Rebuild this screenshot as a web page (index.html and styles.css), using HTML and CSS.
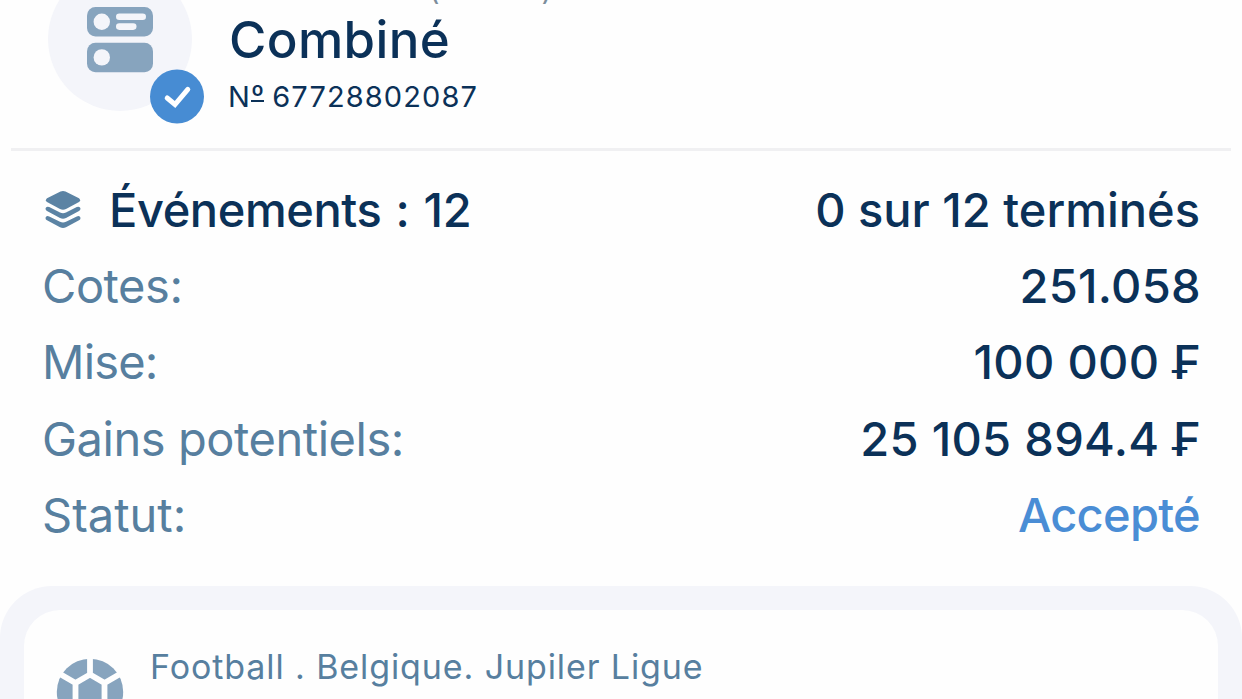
FILE: index.html
```
<!DOCTYPE html>
<html lang="fr">
<head>
<meta charset="utf-8">
<title>Combiné</title>
<link rel="stylesheet" href="styles.css">
</head>
<body>
<main class="page">
  <header class="coupon">
    <div class="coupon-icon">
      <svg class="slip" width="66" height="66" viewBox="0 0 66 66" fill="#87a4be">
        <rect width="66" height="29.5" rx="8.5"/>
        <rect y="35.7" width="66" height="29.5" rx="8.5"/>
        <g fill="#f4f5fa">
          <circle cx="14.8" cy="14.7" r="8.2"/>
          <circle cx="14.8" cy="50.4" r="8.2"/>
          <rect x="29" y="6.5" width="30" height="6.6" rx="3.3"/>
          <rect x="29" y="16.3" width="20.5" height="6.6" rx="3.3"/>
        </g>
      </svg>
      <svg class="badge" width="54" height="55" viewBox="0 0 54 55">
        <circle cx="27" cy="27.5" r="27" fill="#478cd3"/>
        <path d="M17.2 29L25 35.500L37.800 20.300" fill="none" stroke="#fff" stroke-width="5" stroke-linecap="round" stroke-linejoin="miter"/>
      </svg>
    </div>
    <div class="coupon-text">
      <div class="date"><span>(</span><span>)</span></div>
      <h1 class="title">Combiné</h1>
      <div class="number">N<span class="ordinal">º</span> 67728802087</div>
    </div>
  </header>
  <section class="details">
    <div class="row">
      <div class="events">
        <svg class="layers" width="36" height="40" viewBox="0 0 36 40" fill="#5b83a4">
          <path d="M15.5 1.500Q18 .3 20.500 1.500L34 8.300Q36.200 10.200 34 12.100L21 19Q18 20.500 15 19L2 12.100Q-.2 10.200 2 8.300Z"/>
          <path d="M1 17.400Q2.200 16.100 4.200 17.100L15 22.500Q18 24 21 22.500L31.800 17.100Q33.800 16.100 35 17.400Q36.300 19.500 34 21L21 28Q18 29.500 15 28L2 21Q-.3 19.500 1 17.400Z"/>
          <path d="M1 26.700Q2.200 25.400 4.200 26.400L15 31.800Q18 33.300 21 31.800L31.800 26.400Q33.800 25.400 35 26.700Q36.300 28.800 34 30.300L21 37.300Q18 38.800 15 37.300L2 30.300Q-.3 28.800 1 26.700Z"/>
        </svg>
        <span class="value events-count">Événements : 12</span>
      </div>
      <span class="value finished">0 sur 12 terminés</span>
    </div>
    <div class="row"><span class="label">Cotes:</span><span class="value amount">251.058</span></div>
    <div class="row"><span class="label stake">Mise:</span><span class="value amount">100 000 ₣</span></div>
    <div class="row"><span class="label">Gains potentiels:</span><span class="value amount">25 105 894.4 ₣</span></div>
    <div class="row"><span class="label state">Statut:</span><span class="value status">Accepté</span></div>
  </section>
  <section class="events-panel">
    <article class="event">
      <svg class="ball" width="68" height="68" viewBox="0 0 68 68">
        <circle cx="34" cy="34" r="33.200" fill="#87a4be"/>
        <g fill="none" stroke="#fefefe" stroke-width="5.800">
          <path d="M34 -1V16.500M34 16.500L48.500 25V43L34 51L19.500 43V25ZM48.500 25L64 16M19.500 25L4 16M48.500 43L64 52M19.500 43L4 52M34 51V69"/>
        </g>
      </svg>
      <span class="league">Football . Belgique. Jupiler Ligue</span>
    </article>
  </section>
</main>
</body>
</html>
```
FILE: styles.css
```
* { box-sizing: border-box; }
body {
  margin: 0;
  overflow: hidden;
  background: #fefefe;
  font-family: Inter, "Liberation Sans", sans-serif;
  font-feature-settings: "calt" 0;
  color: #0b3158;
}
.page {
  display: flex;
  flex-direction: column;
  width: 1242px;
  height: 699px;
  overflow: hidden;
}
.coupon {
  display: flex;
  flex: none;
  height: 151px;
  margin: 0 11px;
  padding-left: 37px;
  border-bottom: 3px solid #f0f0f2;
}
.coupon-icon {
  position: relative;
  width: 144px;
  height: 144px;
  margin-top: -33px;
  padding: 40px 0 0 39px;
  border-radius: 50%;
  background: #f4f5fa;
}
.slip { display: block; }
.badge {
  position: absolute;
  left: 102px;
  top: 102px;
}
.coupon-text {
  margin-left: 37px;
  white-space: nowrap;
}
.date {
  display: flex;
  gap: 102px;
  height: 38px;
  margin-top: -30px;
  padding-left: 200px;
  font-size: 29px;
  line-height: 40px;
  color: #7c8e9c;
}
.title {
  height: 64px;
  margin: 0;
  font-size: 51px;
  font-weight: 500;
  line-height: 64px;
  letter-spacing: 0.35px;
}
.number {
  height: 50px;
  margin-left: -1px;
  font-size: 29px;
  line-height: 50px;
  letter-spacing: 1.1px;
}
.ordinal {
  display: inline-block;
  height: 19px;
  margin-right: -1px;
  border-bottom: 2px solid currentColor;
  line-height: 25px;
  vertical-align: 1px;
  letter-spacing: 0;
}
.details {
  display: flex;
  flex: none;
  flex-direction: column;
  height: 435px;
  padding: 20px 42px 0 42px;
}
.row {
  display: flex;
  align-items: center;
  justify-content: space-between;
  height: 76.3px;
  font-size: 47px;
  white-space: nowrap;
}
.events {
  display: flex;
  align-items: center;
  gap: 28px;
  padding-left: 3px;
}
.layers { margin-top: 2px; }
.events-count {
  letter-spacing: -0.4px;
  word-spacing: 2px;
}
.label {
  color: #577f9f;
  letter-spacing: -0.45px;
}
.label.stake { letter-spacing: -0.8px; }
.label.state { letter-spacing: 0; }
.value { font-weight: 500; }
.amount {
  margin-right: -1px;
  letter-spacing: 0.3px;
}
.status {
  color: #4a8dd5;
  letter-spacing: -0.7px;
}
.events-panel {
  flex: none;
  height: 200px;
  padding: 24px;
  border-radius: 52px;
  background: #f4f5fa;
}
.event {
  display: flex;
  align-items: flex-start;
  height: 160px;
  padding: 48px 32px;
  border-radius: 36px;
  background: #fefefe;
}
.league {
  margin: -12px 0 0 26px;
  font-size: 34px;
  line-height: 42px;
  letter-spacing: 0.9px;
  color: #577f9f;
}
```
